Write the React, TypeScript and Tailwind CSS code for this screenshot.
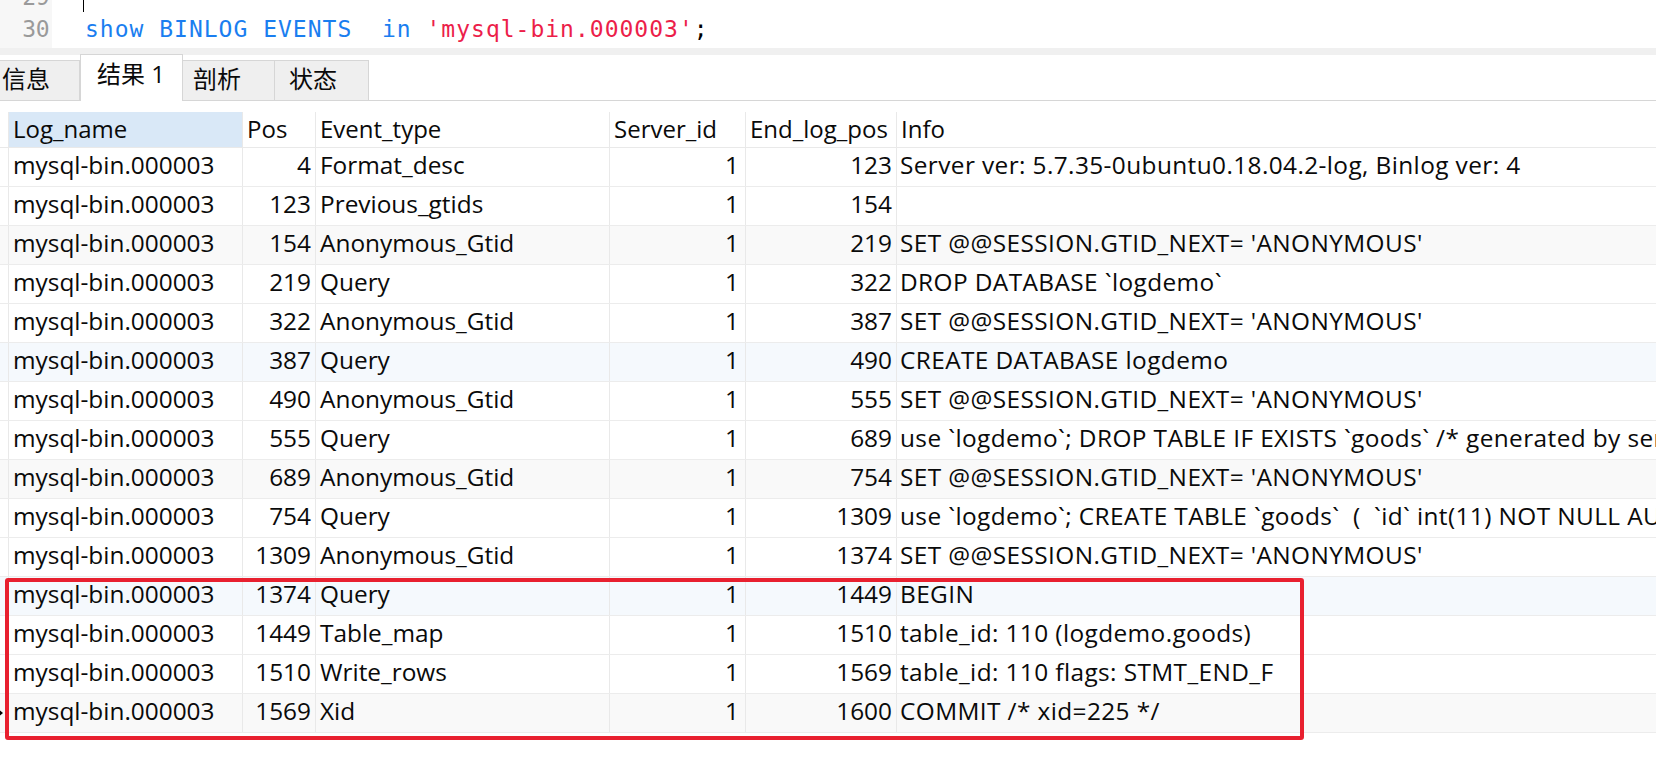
const rows: [string, string, string, string, string, string][] = [
  ["mysql-bin.000003", "4", "Format_desc", "1", "123", "Server ver: 5.7.35-0ubuntu0.18.04.2-log, Binlog ver: 4"],
  ["mysql-bin.000003", "123", "Previous_gtids", "1", "154", ""],
  ["mysql-bin.000003", "154", "Anonymous_Gtid", "1", "219", "SET @@SESSION.GTID_NEXT= 'ANONYMOUS'"],
  ["mysql-bin.000003", "219", "Query", "1", "322", "DROP DATABASE `logdemo`"],
  ["mysql-bin.000003", "322", "Anonymous_Gtid", "1", "387", "SET @@SESSION.GTID_NEXT= 'ANONYMOUS'"],
  ["mysql-bin.000003", "387", "Query", "1", "490", "CREATE DATABASE logdemo"],
  ["mysql-bin.000003", "490", "Anonymous_Gtid", "1", "555", "SET @@SESSION.GTID_NEXT= 'ANONYMOUS'"],
  ["mysql-bin.000003", "555", "Query", "1", "689", "use `logdemo`; DROP TABLE IF EXISTS `goods` /* generated by server */"],
  ["mysql-bin.000003", "689", "Anonymous_Gtid", "1", "754", "SET @@SESSION.GTID_NEXT= 'ANONYMOUS'"],
  ["mysql-bin.000003", "754", "Query", "1", "1309", "use `logdemo`; CREATE TABLE `goods`  (  `id` int(11) NOT NULL AUTO_INCREMENT,"],
  ["mysql-bin.000003", "1309", "Anonymous_Gtid", "1", "1374", "SET @@SESSION.GTID_NEXT= 'ANONYMOUS'"],
  ["mysql-bin.000003", "1374", "Query", "1", "1449", "BEGIN"],
  ["mysql-bin.000003", "1449", "Table_map", "1", "1510", "table_id: 110 (logdemo.goods)"],
  ["mysql-bin.000003", "1510", "Write_rows", "1", "1569", "table_id: 110 flags: STMT_END_F"],
  ["mysql-bin.000003", "1569", "Xid", "1", "1600", "COMMIT /* xid=225 */"],
];

const grid = "grid grid-cols-[9px_234px_73px_294px_136px_151px_1fr]";
const cell = "border-r border-[#e9e9e9] px-[4px] leading-[34px] whitespace-pre overflow-hidden";

function rowBg(i: number) {
  if (i % 6 === 2) return "bg-[#f9f9f9]";
  if (i % 6 === 5) return "bg-[#f5f9fd]";
  return "bg-white";
}

export default function App() {
  return (
    <div
      className="relative w-[1656px] h-[780px] overflow-hidden bg-white text-[#0a0a0a]"
      style={{ fontFamily: "'Open Sans', 'Noto Sans CJK SC', sans-serif" }}
    >
      {/* editor */}
      <div
        className="flex h-[48px] overflow-hidden text-[23px]"
        style={{ fontFamily: "'DejaVu Sans Mono', monospace" }}
      >
        <div className="w-[52px] bg-[#f7f7f7] text-[#9a9a9a] text-right pr-[3px] tracking-[-0.5px]">
          <div className="mt-[-19px] leading-[32px]">29</div>
          <div className="leading-[32px]">30</div>
        </div>
        <div className="flex-1 pl-[33px] tracking-[1px]">
          <div className="mt-[-19px] h-[32px] relative">
            <span className="absolute left-[-2px] top-[19px] h-[12px] w-[1px] bg-black" />
          </div>
          <div className="leading-[32px] whitespace-pre">
            <span className="text-[#1a7ef0]">show BINLOG EVENTS  in </span>
            <span className="text-[#ec1e4a]">'mysql-bin.000003'</span>
            <span className="text-black">;</span>
          </div>
        </div>
      </div>
      <div className="h-[7px] bg-[#f0f0f0]" />

      {/* tabs */}
      <div className="flex items-end h-[46px] border-b border-[#d6d6d6] text-[24px]">
        <div className="w-[80px] h-[41px] bg-[#efefef] border-t border-r border-b border-[#d6d6d6] pl-[2px] leading-[36px] mb-[-1px]">
          信息
        </div>
        <div className="w-[103px] h-[47px] bg-white border-t border-l border-r border-[#d6d6d6] pl-[16px] leading-[38px] mb-[-1px]">
          结果 1
        </div>
        <div className="w-[92px] h-[41px] bg-[#efefef] border-t border-r border-b border-[#d6d6d6] pl-[10px] leading-[36px] mb-[-1px]">
          剖析
        </div>
        <div className="w-[94px] h-[41px] bg-[#efefef] border-t border-r border-b border-[#d6d6d6] pl-[14px] leading-[36px] mb-[-1px]">
          状态
        </div>
      </div>
      <div className="h-[11px]" />

      {/* result grid */}
      <div className="text-[24.4px]">
        <div className={`${grid} h-[35px] border-b border-[#e9e9e9] box-content text-[24px]`}>
          <div className="border-r border-[#e9e9e9]" />
          <div className={`${cell} bg-[#d9e8f7]`}>Log_name</div>
          <div className={cell}>Pos</div>
          <div className={cell}>Event_type</div>
          <div className={cell}>Server_id</div>
          <div className={cell}>End_log_pos</div>
          <div className={`${cell} border-r-0`}>Info</div>
        </div>
        {rows.map((r, i) => (
          <div key={i} className={`${grid} h-[39px] border-b border-[#ececec] ${rowBg(i)}`}>
            <div className="border-r border-[#e9e9e9] relative">
              {i === rows.length - 1 && (
                <span className="absolute left-[-4px] top-[13px] w-0 h-0 border-y-[6px] border-y-transparent border-l-[7px] border-l-black" />
              )}
            </div>
            <div className={cell}>{r[0]}</div>
            <div className={`${cell} text-right`}>{r[1]}</div>
            <div className={cell}>{r[2]}</div>
            <div className={`${cell} text-right pr-[6px]`}>{r[3]}</div>
            <div className={`${cell} text-right`}>{r[4]}</div>
            <div className={`${cell} border-r-0 pl-[3px] tracking-[0.4px]`}>{r[5]}</div>
          </div>
        ))}
      </div>

      {/* annotation */}
      <div className="absolute left-[5px] top-[578px] w-[1299px] h-[162px] border-[4px] border-[#e8202f] rounded-[3px]" />
    </div>
  );
}
